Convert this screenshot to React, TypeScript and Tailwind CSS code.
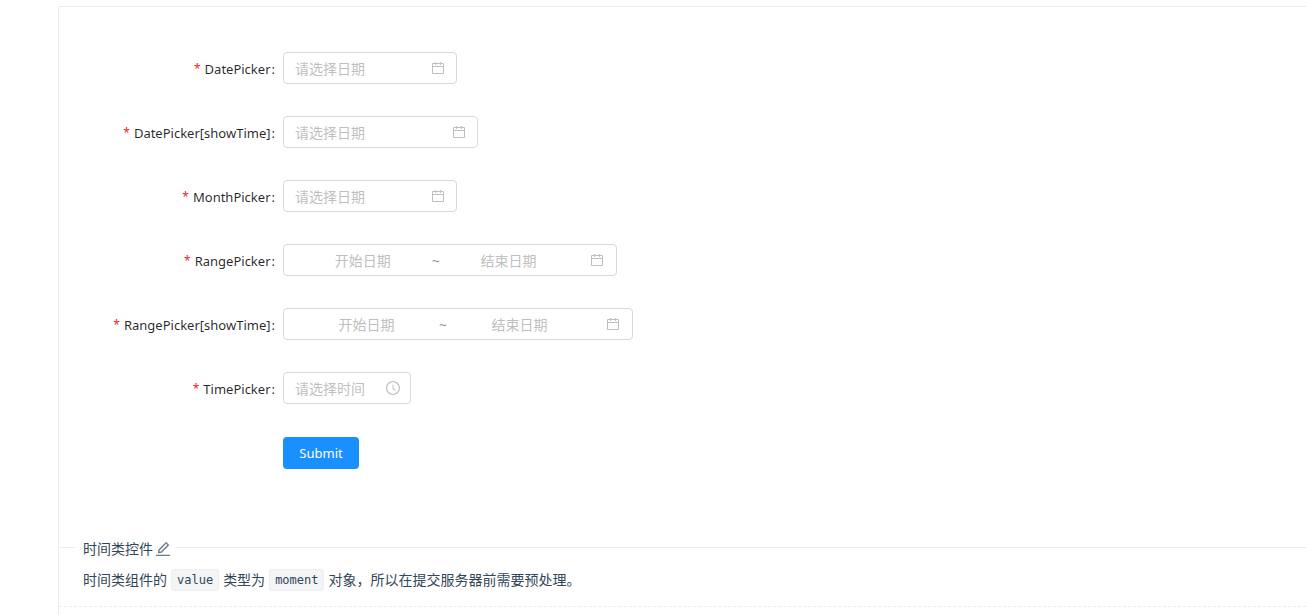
import type { FormEvent } from "react";
import { AiOutlineClockCircle, AiOutlineEdit } from "react-icons/ai";

type Field = {
  id: string;
  label: string;
  width: string;
  kind: "date" | "range" | "time";
  placeholder?: string;
};

const fields: Field[] = [
  { id: "date-picker", label: "DatePicker", width: "w-[174px]", kind: "date", placeholder: "请选择日期" },
  { id: "date-time-picker", label: "DatePicker[showTime]", width: "w-[195px]", kind: "date", placeholder: "请选择日期" },
  { id: "month-picker", label: "MonthPicker", width: "w-[174px]", kind: "date", placeholder: "请选择日期" },
  { id: "range-picker", label: "RangePicker", width: "w-[334px]", kind: "range" },
  { id: "range-time-picker", label: "RangePicker[showTime]", width: "w-[350px]", kind: "range" },
  { id: "time-picker", label: "TimePicker", width: "w-[128px]", kind: "time", placeholder: "请选择时间" },
];

const inputClass =
  "min-w-0 bg-transparent pt-px text-sm text-black/65 outline-none placeholder:text-[#bfbfbf]";

const codeClass =
  "rounded-[3px] border border-[#eeeeee] bg-[#f2f4f5] px-[5px] font-['DejaVu_Sans_Mono',monospace] text-xs leading-5";

function CalendarIcon() {
  return (
    <svg viewBox="0 0 14 14" className="size-[14px] shrink-0 text-[#bfbfbf]" fill="none" stroke="currentColor" aria-hidden="true">
      <path d="M1.5 2.5h11v10h-11zM1.5 5.5h11M4.5 1v3M9.5 1v3" />
    </svg>
  );
}

function Picker({ field }: { field: Field }) {
  return (
    <div
      className={`flex h-8 items-center rounded border border-[#d9d9d9] bg-white px-[11px] focus-within:border-[#40a9ff] ${field.width}`}
    >
      {field.kind === "range" ? (
        <div className="flex flex-1 items-center pr-px">
          <div className="flex flex-1 items-center">
            <input id={field.id} type="text" placeholder="开始日期" className={`w-[46%] text-center ${inputClass}`} />
            <span className="w-[10px] pt-px text-center text-sm text-black/45">~</span>
            <input
              type="text"
              aria-label={`${field.label} 结束日期`}
              placeholder="结束日期"
              className={`w-[46%] text-center ${inputClass}`}
            />
          </div>
          <CalendarIcon />
        </div>
      ) : (
        <>
          <input id={field.id} type="text" placeholder={field.placeholder} className={`flex-1 ${inputClass}`} />
          {field.kind === "time" ? (
            <AiOutlineClockCircle className="-mr-0.5 size-4 shrink-0 text-[#bfbfbf]" />
          ) : (
            <CalendarIcon />
          )}
        </>
      )}
    </div>
  );
}

export default function App() {
  const handleSubmit = (event: FormEvent) => event.preventDefault();

  return (
    <main className="flex min-h-screen bg-white pt-[6px] pl-[58px] font-['Noto_Sans','Noto_Sans_CJK_SC',sans-serif] text-sm">
      <section className="flex-1 rounded-tl-xs border-t border-l border-[#ebedf0]">
        <form onSubmit={handleSubmit} className="flex flex-col gap-8 px-6 pt-[45px] pb-[68px]">
          {fields.map((field) => (
            <div key={field.id} className="flex items-center">
              <label
                htmlFor={field.id}
                className="flex w-[200px] shrink-0 justify-end pt-0.5 pr-2 text-[13px] leading-5 text-black/85"
              >
                <span className="mr-1 text-xs leading-5 text-[#f5222d]">*</span>
                {field.label}
                <span className="ml-px">:</span>
              </label>
              <Picker field={field} />
            </div>
          ))}
          <div className="flex pt-px pl-[200px]">
            <button
              type="submit"
              className="h-8 min-w-[76px] rounded bg-[#1890ff] px-4 text-[13px] text-white hover:bg-[#40a9ff]"
            >
              Submit
            </button>
          </div>
        </form>

        <div className="flex items-center text-[#314659]">
          <div className="mb-[3px] h-px w-4 bg-[#ebedf0]" />
          <h2 className="flex items-center pr-1 pl-2 leading-6">
            时间类控件
            <a href="#edit" aria-label="编辑" className="ml-px text-[#697b8c]">
              <AiOutlineEdit className="size-[18px]" />
            </a>
          </h2>
          <div className="mb-[3px] h-px flex-1 bg-[#ebedf0]" />
        </div>

        <p className="flex items-center gap-1 border-b border-dashed border-[#ebedf0] px-6 pt-[7px] pb-[14px] leading-6 text-[#314659]">
          <span>时间类组件的</span>
          <code className={codeClass}>value</code>
          <span>类型为</span>
          <code className={codeClass}>moment</code>
          <span>对象，所以在提交服务器前需要预处理。</span>
        </p>
      </section>
    </main>
  );
}
